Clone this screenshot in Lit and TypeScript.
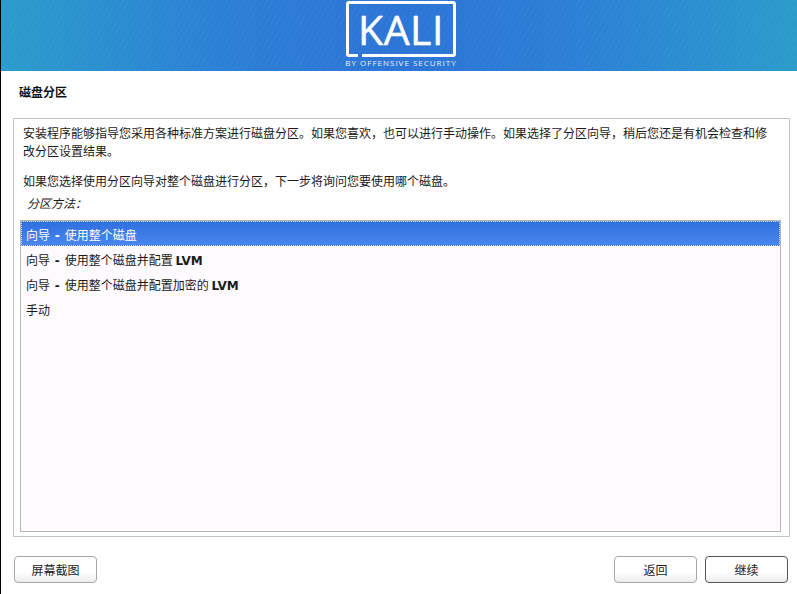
import { html, css, LitElement } from 'lit';
import { customElement } from 'lit/decorators.js';

const options = [
  { text: '使用整个磁盘', suffix: '' },
  { text: '使用整个磁盘并配置 ', suffix: 'LVM' },
  { text: '使用整个磁盘并配置加密的 ', suffix: 'LVM' },
];

@customElement('app-root')
export class AppRoot extends LitElement {
  static styles = css`
    :host {
      display: block;
      width: 797px;
      height: 594px;
      overflow: hidden;
      background: #fff;
      color: #1a1a1a;
      font-family: 'DejaVu Sans', 'Noto Sans CJK SC', sans-serif;
      font-size: 12px;
    }
    .page {
      height: 594px;
      display: flex;
      flex-direction: column;
      border-left: 1px solid #000;
      box-sizing: border-box;
    }
    .banner {
      height: 71px;
      flex: none;
      display: flex;
      justify-content: center;
      background:
        repeating-linear-gradient(120deg, rgba(255, 255, 255, 0.025) 0 2px, rgba(255, 255, 255, 0) 2px 5px),
        linear-gradient(90deg, #2a9ccb 0%, #2c7fd6 28%, #2c74d6 50%, #2c7fd6 72%, #2a9ccb 100%);
    }
    .logo {
      width: 110px;
      margin-left: 4px;
      display: flex;
      flex-direction: column;
      align-items: center;
      color: #fff;
    }
    .logo-box {
      position: relative;
      width: 110px;
      height: 56px;
      margin-top: 1px;
      box-sizing: border-box;
      border: 3px solid #fff;
      border-radius: 3px;
      display: flex;
      align-items: center;
      justify-content: center;
      font-family: 'Open Sans', sans-serif;
      font-size: 41px;
      line-height: 1;
      letter-spacing: 0.5px;
      -webkit-text-stroke: 0.5px #fff;
      color: #fff;
    }
    .logo-notch {
      position: absolute;
      left: 9px;
      bottom: -3px;
      width: 4px;
      height: 3px;
      background: #2c74d6;
    }
    .logo-sub {
      margin-top: 1px;
      font-family: 'Open Sans', sans-serif;
      font-size: 8px;
      line-height: 10px;
      letter-spacing: 1px;
      white-space: nowrap;
      color: #eaf1fb;
    }
    .title {
      height: 47px;
      flex: none;
      box-sizing: border-box;
      padding: 13px 0 0 18px;
      font-weight: bold;
      line-height: 18px;
      color: #111;
    }
    .frame {
      margin: 0 7px 0 12px;
      height: 419px;
      box-sizing: border-box;
      border: 1px solid #c4c4c4;
      padding: 6px 7px 4px 9px;
      display: flex;
      flex-direction: column;
    }
    .intro {
      margin: 0 12px 0 0;
      line-height: 18px;
    }
    .intro + .intro {
      margin-top: 12px;
    }
    .label {
      margin: 4px 0 7px 4px;
      line-height: 18px;
      font-style: italic;
    }
    .list {
      flex: 1;
      margin-left: -3px;
      margin-right: 1px;
      border: 1px solid #b4b4b4;
      background: #fefafe;
    }
    .row {
      height: 25px;
      box-sizing: border-box;
      padding: 2px 0 0 4px;
      line-height: 24px;
      white-space: pre;
      border: 1px solid transparent;
    }
    .row.selected {
      color: #fff;
      background: linear-gradient(180deg, #2f6fdf 0%, #4a86ee 100%);
      border: 1px dotted #cfdcf5;
    }
    .row b {
      font-weight: bold;
    }
    .dash {
      margin: 0 1px;
    }
    .row b.suffix {
      margin-left: -1px;
    }
    .footer {
      flex: 1;
      display: flex;
      align-items: flex-start;
      gap: 8px;
      padding: 19px 9px 0 13px;
    }
    .spacer {
      flex: 1;
    }
    button {
      width: 83px;
      height: 27px;
      box-sizing: border-box;
      border: 1px solid #a8a8a8;
      border-radius: 4px;
      background: linear-gradient(180deg, #fff 0%, #fff 60%, #ededed 100%);
      font: inherit;
      color: #1a1a1a;
      padding: 0;
    }
    button.primary {
      border-color: #555;
    }
  `;

  render() {
    return html`
      <div class="page">
        <div class="banner">
          <div class="logo">
            <div class="logo-box">KALI<span class="logo-notch"></span></div>
            <div class="logo-sub">BY OFFENSIVE SECURITY</div>
          </div>
        </div>
        <div class="title">磁盘分区</div>
        <div class="frame">
          <p class="intro">安装程序能够指导您采用各种标准方案进行磁盘分区。如果您喜欢，也可以进行手动操作。如果选择了分区向导，稍后您还是有机会检查和修改分区设置结果。</p>
          <p class="intro">如果您选择使用分区向导对整个磁盘进行分区，下一步将询问您要使用哪个磁盘。</p>
          <div class="label">分区方法：</div>
          <div class="list">
            ${options.map(
              (o, i) => html`<div class="row ${i === 0 ? 'selected' : ''}">向导 <b class="dash">-</b> ${o.text}${o.suffix ? html`<b class="suffix">${o.suffix}</b>` : ''}</div>`
            )}
            <div class="row">手动</div>
          </div>
        </div>
        <div class="footer">
          <button>屏幕截图</button>
          <div class="spacer"></div>
          <button>返回</button>
          <button class="primary">继续</button>
        </div>
      </div>
    `;
  }
}

declare global {
  interface HTMLElementTagNameMap {
    'app-root': AppRoot;
  }
}
